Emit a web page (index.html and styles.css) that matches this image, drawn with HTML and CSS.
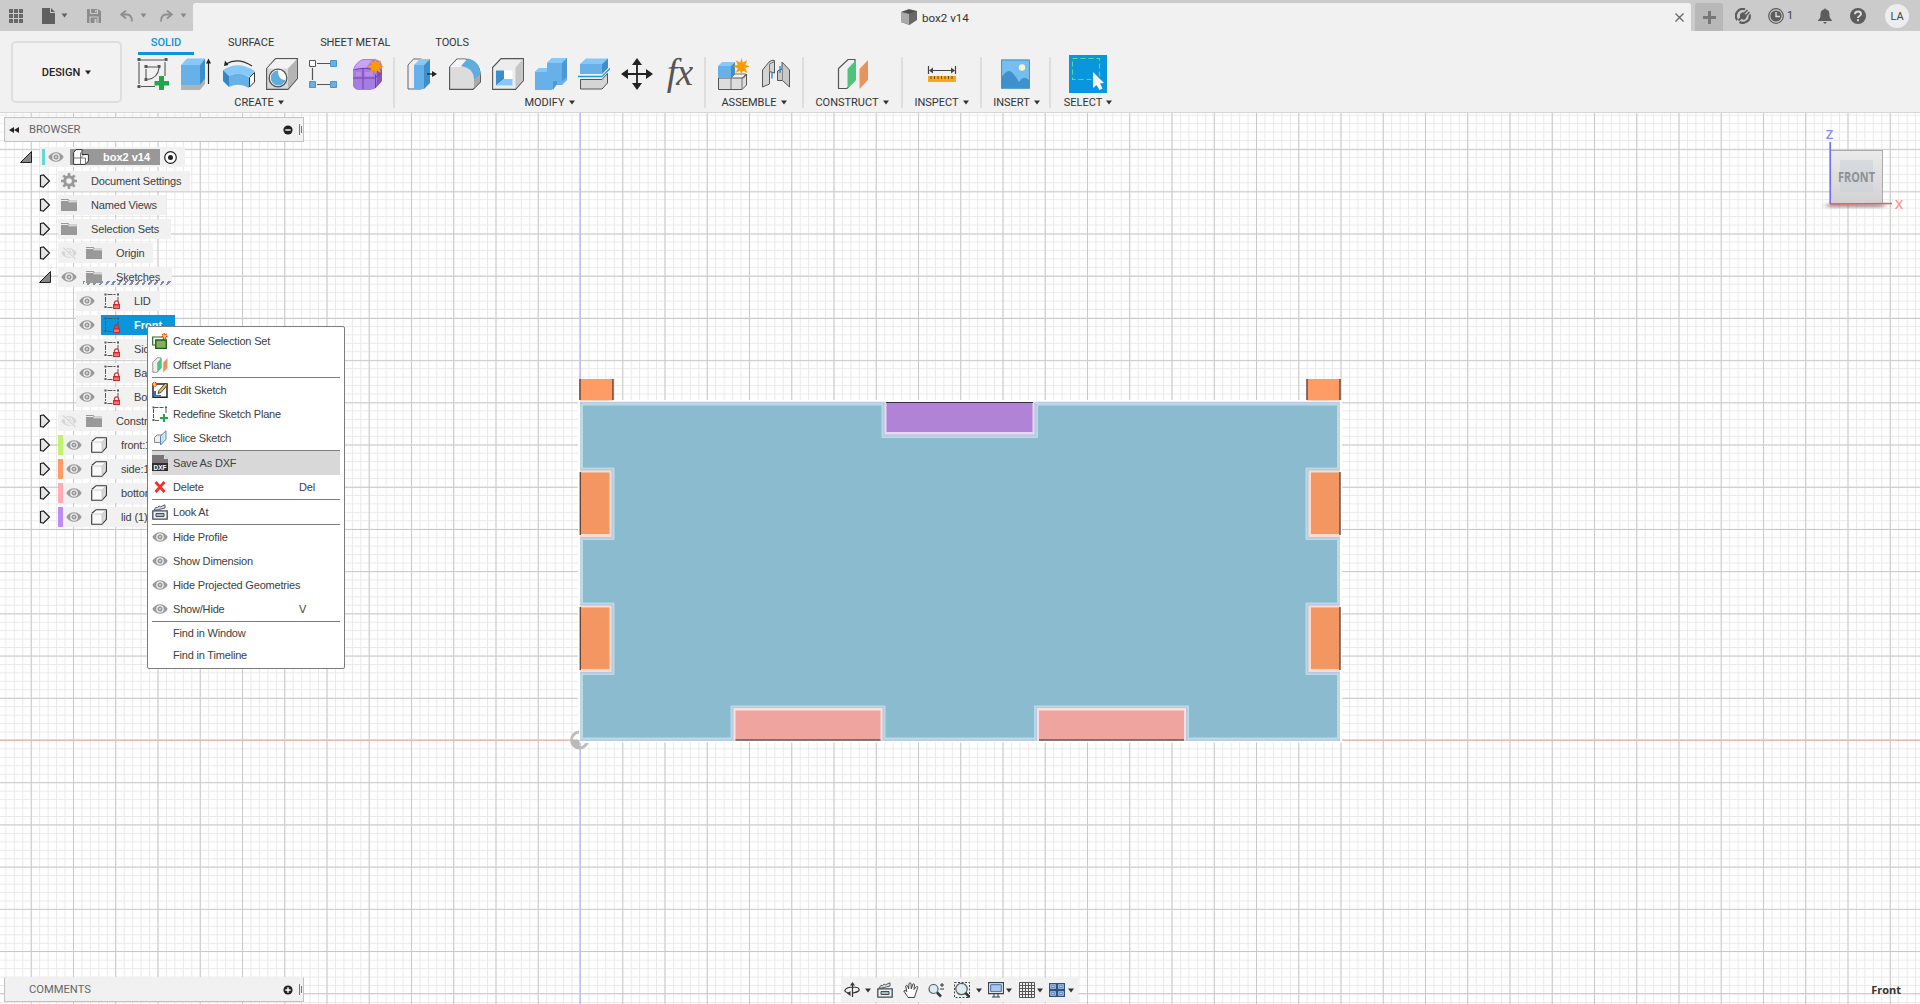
FILE: index.html
```html
<!DOCTYPE html>
<html lang="en">
<head>
<meta charset="utf-8">
<title>box2 v14</title>
<link rel="stylesheet" href="styles.css">
</head>
<body>
<svg class="defs" width="0" height="0">
  <symbol id="eye" viewBox="0 0 16 16"><path d="M.3 8C3.5 1.6 12.5 1.6 15.7 8 12.5 14.4 3.500 14.400.3 8z" fill="#999"/><circle cx="8" cy="8" r="3.200" fill="none" stroke="#eee" stroke-width="1.300"/><circle cx="8" cy="8" r="1" fill="#ddd"/></symbol>
  <symbol id="eye-off" viewBox="0 0 16 16"><path d="M.3 8C3.500 1.600 12.500 1.600 15.700 8 12.500 14.400 3.500 14.400.3 8z" fill="#d6d6d6"/><circle cx="8" cy="8" r="3.200" fill="none" stroke="#f1f1f1" stroke-width="1.300"/><path d="M1.500 3l13 11" stroke="#f1f1f1" stroke-width="3"/><path d="M2 2.500l12.500 11.500" stroke="#d6d6d6" stroke-width="1.200"/></symbol>
  <symbol id="folder" viewBox="0 0 16 16"><path d="M0 2h7.500l1 1.300H16V14H0z" fill="#999"/><path d="M0 3.500h7l1 1.300h8" stroke="#eee" fill="none"/><path d="M8 3.500h8v-2H9z" fill="#f1f1f1"/></symbol>
  <symbol id="gear" viewBox="0 0 16 16"><circle cx="8" cy="8" r="4.300" fill="none" stroke="#999" stroke-width="3"/><path d="M8 0v3M8 13v3M0 8h3M13 8h3M2.300 2.300l2.200 2.200M11.500 11.500l2.200 2.200M2.300 13.700l2.200-2.200M11.500 4.500l2.200-2.200" stroke="#999" stroke-width="2.600"/></symbol>
  <symbol id="sketch-lock" viewBox="0 0 16 16"><path d="M3.500 1.500h8M1.500 4v8M14 4v4M3.500 14.500h5" stroke="#555" fill="none" stroke-dasharray="5 1"/><path d="M.5.500h2v2h-2zM13 .5h2v2h-2zM.5 13h2v2h-2z" fill="#555"/><path d="M9 11h7v5H9z" fill="#d22b2b"/><path d="M10.500 11V9.800a2 2 0 0 1 4 0V11" fill="none" stroke="#d22b2b" stroke-width="1.200"/><path d="M10 12.500h5v2.500h-5z" fill="#e87878"/></symbol>
  <symbol id="cube" viewBox="0 0 16 16"><path d="M.5 4.500l4-4h11v10l-4.500 5H.5z" fill="#fafafa"/><path d="M11 5v10.500l4.500-5V.5z" fill="#d5d7da"/><path d="M.7 5v10.300H11l4.500-5V.7H5L.7 4.500" fill="none" stroke="#333" stroke-width="1.100"/><path d="M.7 5H11V15M11 5l4.300-4.300" fill="none" stroke="#c4c4c4" stroke-width=".8"/></symbol>
  <symbol id="closed" viewBox="0 0 12 16"><path d="M1.500 2.500L4.500 2l6 6-6 6-3-.5z" fill="#e6e6e6" stroke="#222" stroke-width="1.200"/></symbol>
  <symbol id="open" viewBox="0 0 12 12"><path d="M11.500.500v11H.5z" fill="#888" stroke="#222"/></symbol>
  <symbol id="down" viewBox="0 0 6 5"><path d="M0 .5h6L3 4.500z" fill="currentColor"/></symbol>
  <symbol id="spark" viewBox="0 0 16 16"><path d="M8 0l1.300 4.300L13.400 2 11.500 6.300 16 8l-4.500 1.500L13.500 14l-4.300-2.200L8 16l-1.300-4.200L2.500 14l2-4.300L0 8l4.500-1.700L2.500 2l4.300 2.200z" fill="#f90"/></symbol>
  <symbol id="planes" viewBox="0 0 32 32"><path d="M1.500 10.500L11 1.500h7v20l-8 9H1.500z" fill="#f0f0f0" stroke="#555" stroke-width="1.200"/><path d="M10.500 11L19 2v20l-8.500 9z" fill="#4fc37c"/><path d="M22.500 11L31 2v20l-8.500 9z" fill="#e6955e"/></symbol>
  <symbol id="clapper" viewBox="0 0 16 16"><path d="M.8 6.800h14.400v8.400H.8z" fill="#eef0f3" stroke="#454c57" stroke-width="1.300"/><path d="M2 6L4 3.200l1.500.6L7 2l1.500.8L13 .8V4L5 6z" fill="#dce0e5" stroke="#454c57" stroke-width=".9"/><path d="M4 9.500h8v3H4z" fill="#aeb6c0" stroke="#454c57"/></symbol>
</svg>

<header class="titlebar">
  <div class="quick">
    <svg class="q-grid" viewBox="0 0 14 14"><path d="M0 0h4v4H0zM5 0h4v4H5zM10 0h4v4h-4zM0 5h4v4H0zM5 5h4v4H5zM10 5h4v4h-4zM0 10h4v4H0zM5 10h4v4H5zM10 10h4v4h-4z" fill="#666"/></svg>
    <svg class="q-file" viewBox="0 0 13 16"><path d="M0 0h8v5h5v11H0zM9 0l4 4H9z" fill="#606060"/></svg>
    <svg class="q-arrow a1" viewBox="0 0 6 5"><use href="#down"/></svg>
    <svg class="q-save" viewBox="0 0 14 14"><path d="M0 0h11.500L14 2.500V14H0z" fill="#8b8b8b"/><path d="M3.500 0v4.500h7V0M3 14V8h8v6" fill="none" stroke="#cbcbcb" stroke-width="1.200"/><path d="M7.500 10h2v4h-2zM8 1h1.500v2H8z" fill="#cbcbcb"/></svg>
    <svg class="q-undo" viewBox="0 0 13 12"><path d="M6 .5L1 4.500l5 4M1.500 4.500H7q5 .3 5 7" fill="none" stroke="#8f8f8f" stroke-width="1.800"/></svg>
    <svg class="q-arrow a2" viewBox="0 0 6 5"><use href="#down"/></svg>
    <svg class="q-redo" viewBox="0 0 13 12"><path d="M7 .5l5 4-5 4M11.500 4.500H6q-5 .3-5 7" fill="none" stroke="#8f8f8f" stroke-width="1.800"/></svg>
    <svg class="q-arrow a3" viewBox="0 0 6 5"><use href="#down"/></svg>
  </div>
  <div class="doc-tab">
    <svg class="doc-icon" viewBox="0 0 16 16"><path d="M0 3l8-3 8 2v9l-7.500 5L0 13z" fill="#686868"/><path d="M0 3l8 2v10.500L0 13z" fill="#aaa"/><path d="M1 2.800l7-2 7 1.500-7 2.200z" fill="#4e4e4e"/></svg>
    <span class="doc-name">box2 v14</span>
    <svg class="doc-close" viewBox="0 0 9 9"><path d="M.5.500l8 8M8.500.500l-8 8" stroke="#666" stroke-width="1.300"/></svg>
  </div>
  <div class="new-tab"><svg width="13" height="13"><path d="M6.500 0v13M0 6.500h13" stroke="#777" stroke-width="3"/></svg></div>
  <div class="status">
    <svg class="s-ext" viewBox="0 0 16 16"><path d="M10 1.300A7 7 0 0 0 2.200 12M4.500 14A7 7 0 0 0 14.700 6.500" fill="none" stroke="#5c5c5c" stroke-width="2.200"/><path d="M3.500 12.500l3-3" stroke="#5c5c5c" stroke-width="2"/><path d="M5.500 5.500L8 4l4 4-1.500 3q-2.500 1.500-4.500-.5-2-2-.5-5z" fill="#5c5c5c"/><path d="M9 5.500L12.500 2M11 7.500l3.500-3.500" stroke="#5c5c5c" stroke-width="1.600"/></svg>
    <svg class="s-clock" viewBox="0 0 16 16"><circle cx="8" cy="8" r="7.300" fill="none" stroke="#5c5c5c" stroke-width="1.200"/><circle cx="8" cy="8" r="5.600" fill="#5c5c5c"/><path d="M8 4v4.500h4" fill="none" stroke="#ddd" stroke-width="1.400"/></svg>
    <span class="jobs">1</span>
    <svg class="s-bell" viewBox="0 0 14 16"><path d="M7 0l1 1.500C11 2 11.500 4 11.500 8q0 2.500 2.500 4.500v.5H0v-.5Q2.500 10.500 2.500 8C2.500 4 3 2 6 1.500zM5 14h4l-2 2z" fill="#5c5c5c"/></svg>
    <svg class="s-help" viewBox="0 0 16 16"><circle cx="8" cy="8" r="8" fill="#5c5c5c"/><path d="M5 6.200Q5 3.500 8 3.500t3 2.500q0 1.200-1.500 2T8 10M8 11.300v1.900" fill="none" stroke="#ddd" stroke-width="1.900"/></svg>
    <span class="avatar">LA</span>
  </div>
</header>

<nav class="ribbon">
  <button class="workspace">DESIGN <svg viewBox="0 0 6 5"><use href="#down"/></svg></button>
  <div class="ribbon-main">
    <div class="tabs"><span class="tab solid">SOLID</span><span class="tab surface">SURFACE</span><span class="tab sheet">SHEET METAL</span><span class="tab tools">TOOLS</span></div>
    <div class="groups">
      <section class="group g-create">
        <div class="tools-row">
          <svg viewBox="0 0 32 32"><path d="M3 2h24M2 4v22M28 4v14M4 28.500h14M10 9h10M9 11v9M22 10Q21 20 10.500 21.500" fill="none" stroke="#555" stroke-width="1.100"/><path d="M.5 0h3v3h-3zM27.500 0h3v3h-3zM.5 27h3v3h-3zM7.500 7h3v3h-3zM20.500 7h3v3h-3zM7.500 20h3v3h-3z" fill="#555"/><path d="M22 18h5v5h5v4.500h-5V32h-5v-4.500h-4.500V23H22z" fill="#1fa84a"/></svg>
          <svg viewBox="0 0 32 32"><path d="M1 27h19l5-6v5l-5 6H1z" fill="#b3b3b3"/><path d="M1 7h19v20H1z" fill="#68b0e8"/><path d="M1 7l6-6.500h18L20 7z" fill="#86c8f8"/><path d="M20 7l5-6.500V21l-5 6z" fill="#3c8fcb"/><path d="M28.500 26V3" stroke="#222" stroke-width="1.200"/><path d="M26 5.500L28.500.5l2.500 5z" fill="#222"/></svg>
          <svg viewBox="0 0 32 32"><path d="M0 12Q15 2 32 13l-5 6Q14 13 6 18z" fill="#86c8f8"/><path d="M0 12l6 6v11l-6-6z" fill="#3187c7"/><path d="M6 18q10-5 20 1v11q-10-6-20-1z" fill="#68b0e8"/><path d="M26.500 19.500l5-5V24l-5 5z" fill="#fff" stroke="#333"/><path d="M3 6Q15-1 29 8" fill="none" stroke="#333" stroke-width="1.300"/><path d="M1 8l1-5.500L5.500 7z" fill="#222"/></svg>
          <svg viewBox="0 0 32 32"><path d="M.6 10.500L9.500.6H31.400v20L22 31.400H.6z" fill="#d8d8d8" stroke="#555" stroke-width="1.100"/><path d="M1.200 10.500L10 1.200h20.500L22 10.500z" fill="#f3f3f3"/><path d="M22 10.500l8.800-9V20L22 30.500z" fill="#b4b4b4"/><circle cx="12" cy="20" r="8.800" fill="#fff" stroke="#555" stroke-width="1.300"/><path d="M12 12.500A7.500 7.500 0 1 0 19.500 22Q12 22 12 12.500z" fill="#5facdf"/></svg>
          <svg viewBox="0 0 32 32"><path d="M8 5.500h13M3.500 10v12M8 26.500h13" stroke="#555" stroke-width="1.200"/><path d="M.5 2.500h6v6h-6z" fill="#fff" stroke="#555"/><path d="M21.500 2.500h6v6h-6zM21.500 23.500h6v6h-6zM.5 23.500h6v6h-6z" fill="#68b0e8" stroke="#4c94cb"/></svg>
          <svg viewBox="0 0 32 32"><path d="M1 13Q1 9 5 5t7-4h10q7 1 8 6v15q-1 3-5 7-3 3-7 3H6q-4-1-5-4z" fill="#a57ce0"/><path d="M2 13q0-3 4-8 3-3 6-3h8l-6 8q-6-1-12 3z" fill="#c9a4f4"/><path d="M24 9l6 3v11l-6 6q2-8 0-20z" fill="#8557bd"/><path d="M11 10v21M1 20h22l7-6M1.500 12q12-4 22 1v17" fill="none" stroke="#7041aa"/><path d="M4 14h5v4H4zM13 14h8v4h-8z" fill="#b68cef"/><use href="#spark" x="15" y="0" width="17" height="17"/></svg>
        </div>
        <div class="label">CREATE <svg viewBox="0 0 6 5"><use href="#down"/></svg></div>
      </section>
      <section class="group g-modify">
        <div class="tools-row">
          <svg viewBox="0 0 32 32"><path d="M2 7l5.500-6h8v30H2z" fill="#eee" stroke="#666"/><path d="M8 7l6-6h10l-6 6z" fill="#86c8f8"/><path d="M8 7h10v24H8z" fill="#68b0e8"/><path d="M18 7l6-6v24l-6 6z" fill="#3c8fcb"/><path d="M21 16h6" stroke="#222" stroke-width="1.300"/><path d="M26 13l5 3-5 3z" fill="#222"/></svg>
          <svg viewBox="0 0 32 32"><path d="M.6 9L8 1h8q15 2 15.400 17v6L24 31.400H.6z" fill="#dcdcdc" stroke="#555" stroke-width="1.100"/><path d="M1 9L8 1.500h9L12 9z" fill="#f5f5f5"/><path d="M12 8l7-7.500Q31 3 31.500 17L25 22Q25 10 12 8z" fill="#5facdf"/><path d="M25 22l6-5v7l-6 6z" fill="#aaa"/></svg>
          <svg viewBox="0 0 32 32"><path d="M.6 9.500L9 .6h22.400v22L23.500 31.400H.6z" fill="#ececec" stroke="#555" stroke-width="1.100"/><path d="M23.500 9.500l7.300-8v21l-7.300 8z" fill="#c6c6c6"/><path d="M4 12.500h16.500v15H4z" fill="#fff"/><path d="M4 12.500h8V21l-8 6.500z" fill="#3c8fcb"/><path d="M4 27.500L12 21h8.500v6.500z" fill="#86c8f8"/></svg>
          <svg viewBox="0 0 32 32"><path d="M0 14l4-4h8V5l5-5h15v22l-5 5h-6l-4 5H0z" fill="#68b0e8"/><path d="M0 14l4-4h8v4zM12 5l5-5h15l-5 5z" fill="#86c8f8"/><path d="M27 5l5-5v19l-5 4h-6V5zM18 23h4v3l-4 6z" fill="#4b99d2"/><path d="M12 5h15v18h-9v5H12z" fill="#68b0e8"/></svg>
          <svg viewBox="0 0 32 32"><path d="M2 6l6-5.500h22L24 6z" fill="#86c8f8"/><path d="M2 6h22v10H2z" fill="#68b0e8"/><path d="M24 6l6-5.500V10l-6 6z" fill="#3c8fcb"/><path d="M0 18.500h24l8-8" fill="none" stroke="#1b9be0" stroke-width="1.300"/><path d="M2.500 21.500H24l5.500-6V25L24 31H2.500z" fill="#d5d5d5" stroke="#555"/></svg>
          <svg viewBox="0 0 32 32"><path d="M16 5v22M5 16h22" stroke="#222" stroke-width="1.800"/><path d="M16 0l5 7H11zM16 32l5-7H11zM0 16l7-5v10zM32 16l-7-5v10z" fill="#222"/></svg>
          <span class="fx">fx</span>
        </div>
        <div class="label">MODIFY <svg viewBox="0 0 6 5"><use href="#down"/></svg></div>
      </section>
      <section class="group g-assemble">
        <div class="tools-row">
          <svg viewBox="0 0 32 32"><path d="M1.500 20h25l3-4v11l-4.500 4.500H1.500z" fill="#ddd" stroke="#555"/><path d="M14 20v11M14 20l4-4h11l-4 4v11" fill="none" stroke="#777"/><path d="M1 8l4-4h13l-4 4z" fill="#86c8f8"/><path d="M1 8h13v12H1z" fill="#68b0e8"/><path d="M14 8l4-4v12l-4 4z" fill="#3c8fcb"/><use href="#spark" x="16" y="0" width="17" height="17"/></svg>
          <svg viewBox="0 0 32 32"><path d="M2.500 12L9 4q3-2.500 5.500-1.500v12.500l-5-1.500v12.500l-7 3z" fill="#d4d4d4" stroke="#555"/><path d="M9.500 14V6l5-2.500" fill="none" stroke="#777"/><path d="M22 4l7.500 8v17l-7-6.500h-5V13l4.500-2z" fill="#c8c8c8" stroke="#555"/><path d="M22.500 4.500v18" fill="none" stroke="#888"/><path d="M12 14.500v6M20 8v7" fill="none" stroke="#1b87d4" stroke-width="1.300"/></svg>
        </div>
        <div class="label">ASSEMBLE <svg viewBox="0 0 6 5"><use href="#down"/></svg></div>
      </section>
      <section class="group g-construct">
        <div class="tools-row"><svg viewBox="0 0 32 32"><use href="#planes"/></svg></div>
        <div class="label">CONSTRUCT <svg viewBox="0 0 6 5"><use href="#down"/></svg></div>
      </section>
      <section class="group g-inspect">
        <div class="tools-row"><svg viewBox="0 0 32 32"><path d="M2.500 8v8M29.500 8v8M5 12.500h22" stroke="#444" stroke-width="1.200"/><path d="M3 12.500l4-3v6zM29 12.500l-4-3v6z" fill="#444"/><path d="M2 18h28v6H2z" fill="#f6a91c"/><path d="M5 18v3M8.500 18v3M12 18v3M15.500 18v3M19 18v3M22.500 18v3M26 18v3" stroke="#6b5119"/></svg></div>
        <div class="label">INSPECT <svg viewBox="0 0 6 5"><use href="#down"/></svg></div>
      </section>
      <section class="group g-insert">
        <div class="tools-row"><svg viewBox="0 0 32 32"><path d="M2 1.500h29v29H2z" fill="#76bdf0"/><path d="M2 20q5-8 9-7 3 1 9 11 5-8 11-1v7.500H2z" fill="#3d91cc"/><path d="M2.500 2h28v28h-28z" fill="none" stroke="#4294d0"/><circle cx="23" cy="9.500" r="3.200" fill="#fbf7c8"/></svg></div>
        <div class="label">INSERT <svg viewBox="0 0 6 5"><use href="#down"/></svg></div>
      </section>
      <section class="group g-select">
        <div class="tools-row"><svg class="select-icon" viewBox="0 0 38 38"><path d="M0 0h38v38H0z" fill="#0a96dc"/><path d="M3.500 3.500h27v21h-27z" fill="none" stroke="#5fd897" stroke-dasharray="5 3" stroke-width="1.100"/><path d="M24 17v16l3.500-3 3 5 3-1.500-2.500-5 4-.5z" fill="#fff"/></svg></div>
        <div class="label">SELECT <svg viewBox="0 0 6 5"><use href="#down"/></svg></div>
      </section>
    </div>
  </div>
</nav>

<main class="viewport">
  <svg class="scene" width="1920" height="891" viewBox="0 113 1920 891">
    <defs>
      <pattern id="minor" x="580" y="740" width="8.450" height="8.450" patternUnits="userSpaceOnUse"><path d="M0 .5H8.450M.5 0V8.450" stroke="#e9e9e9" fill="none"/></pattern>
      <pattern id="major" x="580" y="740" width="42.250" height="42.200" patternUnits="userSpaceOnUse"><path d="M0 .5H42.250M.5 0V42.200" stroke="#c9c9c9" fill="none"/></pattern>
      <linearGradient id="cubeface" x1="0" y1="0" x2="0" y2="1"><stop offset="0" stop-color="#ebebeb"/><stop offset="1" stop-color="#d2d2d2"/></linearGradient>
      <filter id="soft" x="-20%" y="-200%" width="140%" height="500%"><feGaussianBlur stdDeviation="3 1.500"/></filter>
    </defs>
    <rect y="113" width="1920" height="891" fill="#fff"/>
    <rect y="113" width="1920" height="891" fill="url(#minor)"/>
    <rect y="113" width="1920" height="891" fill="url(#major)"/>
    <path d="M580 113V1004" stroke="#c3c2fa" stroke-width="1.600"/>
    <path d="M0 740H1920" stroke="#fbb6b6" stroke-width="1.400"/>
    <path d="M578 400H1342V742.500H578z" fill="#fff"/>
    <circle cx="579.500" cy="740" r="8" fill="none" stroke="#bebebe" stroke-width="3"/><path d="M571 740h8.500v9a9 9 0 0 1-8.500-9z" fill="#b9b9b9"/>
    <path d="M579 729h11v11h-11zM580 740h10v3h-10z" fill="#fff"/>
    <path d="M580 379h33v21h-33zM1307 379h33v21h-33z" fill="#ff9c66"/>
    <path d="M580 400.500h33M1307 400.500h33" stroke="#fbd5c3"/>
    <path d="M580 379.500h33M1307 379.500h33" stroke="#ef9e79"/>
    <path d="M580 379v21M613 379v21M1307 379v21M1340 379v21" stroke="#5e4232" stroke-width="1.400"/>
    <path d="M580 402.500H1340V740.500H580z" fill="#8abbcf"/>
    <path d="M581.500 404H884 M1036 404H1338.500V739M1338.500 739H1188M1036 739H883M733 739H581.500V404" fill="none" stroke="#bcd9e5" stroke-width="3"/>
    <path d="M580 402.500H884M1036 402.500h304M580 740.300h152M884 740.300h152M1188 740.300h152" stroke="#b9cbe4" stroke-width="1.600"/>
    <g fill="#bcd9e5"><rect x="580" y="467.500" width="34.500" height="72.500" rx="1"/><rect x="580" y="602.500" width="34.500" height="72.500" rx="1"/><rect x="1305.500" y="467.500" width="34.500" height="72.500" rx="1"/><rect x="1305.500" y="602.500" width="34.500" height="72.500" rx="1"/><path d="M881.500 402.500H1038V438H881.500zM730.500 705.500h155v35h-155zM1034 705.500h155v35h-155z"/></g>
    <g fill="#b7c8e2"><path d="M580 469h33v69.500h-33zM580 604h33v69.500h-33zM1307 469h33v69.500h-33zM1307 604h33v69.500h-33zM883 402.500h153.500V436.500H883zM732 707h152v33.500H732zM1035.500 707h152v33.500h-152z"/></g>
    <g fill="#f9dccf"><path d="M580 470.500h31.500V537H580zM580 605.500h31.500V672H580zM1308.500 470.500H1340V537h-31.500zM1308.500 605.500H1340V672h-31.500z"/></g>
    <path d="M884.500 402.500h150V434.500h-150z" fill="#e8d6f2"/><path d="M733.500 708h149v32.500h-149zM1037 708h149v32.500h-149z" fill="#f9dfdd"/>
    <path d="M580 472.500h29.500V534H580zM580 607.500h29.500V669H580zM1311 472.500h29V534h-29zM1311 607.500h29V669h-29z" fill="#f39661"/>
    <path d="M886.500 402H1032.500V432H886.500z" fill="#b083d7"/><path d="M735.500 710.500h145V740h-145zM1039 710.500h145V740h-145z" fill="#efa49f"/>
    <path d="M580.300 472v63M580.300 607v63M1340 472v63M1340 607v63" stroke="#5f4030" stroke-width="1.300"/>
    <path d="M886 402.500h147" stroke="#392a47" stroke-width="1.200"/><path d="M735.500 740h145M1039 740h145" stroke="#6c5454" stroke-width="1.500"/>
    <path d="M1827 204h60l-5 3h-55z" fill="#888" filter="url(#soft)"/>
    <rect x="1830.500" y="150.500" width="52" height="53" fill="url(#cubeface)" stroke="#aaa"/>
    <rect x="1840" y="160" width="33" height="32" fill="#cbd0d8" opacity=".55"/>
    <text class="cube-text" x="1856.500" y="181.500" textLength="37" lengthAdjust="spacingAndGlyphs">FRONT</text>
    <path d="M1830.200 142v62" stroke="#7472f2" stroke-width="1.700"/><path d="M1830 204l62-.5" stroke="#ea5b5b" stroke-width="1.700"/>
    <text class="axis z" x="1829.500" y="138.500">Z</text><text class="axis x" x="1899" y="208.500">X</text>
  </svg>

  <aside class="browser">
    <div class="panel-head"><svg class="rewind" viewBox="0 0 10 6"><path d="M5 0v6L0 3zM10 0v6L5 3z" fill="#222"/></svg><span>BROWSER</span><svg class="round" viewBox="0 0 10 10"><circle cx="5" cy="5" r="4.600" fill="#222"/><path d="M2.300 5h5.400" stroke="#fff" stroke-width="1.400"/></svg><svg class="grip" viewBox="0 0 3 11"><path d="M.5 0v11M2.500 2v7" stroke="#777"/></svg></div>
    <div class="tree">
      <div class="row l0"><svg class="tw o"><use href="#open"/></svg><div class="item root"><i class="bar cyan"></i><svg class="ic"><use href="#eye"/></svg><div class="root-name"><svg class="ic" viewBox="0 0 16 16"><path d="M.6 3.500L3 .6h6v4.900h6.400V12l-3 3.400H.6z" fill="#fff" stroke="#333"/><path d="M.6 9h6.900V3.500M7.500 9l3-3M7.500 9h5v6M7.500 9v6" fill="none" stroke="#777"/></svg><b>box2 v14</b></div><svg class="radio" viewBox="0 0 13 13"><circle cx="6.500" cy="6.500" r="5.800" fill="#fff" stroke="#222" stroke-width="1.200"/><circle cx="6.500" cy="6.500" r="2.500" fill="#222"/></svg></div></div>
      <div class="row l1"><svg class="tw"><use href="#closed"/></svg><div class="item end9"><svg class="ic"><use href="#gear"/></svg><span>Document Settings</span></div></div>
      <div class="row l1"><svg class="tw"><use href="#closed"/></svg><div class="item end9"><svg class="ic"><use href="#folder"/></svg><span>Named Views</span></div></div>
      <div class="row l1"><svg class="tw"><use href="#closed"/></svg><div class="item"><svg class="ic"><use href="#folder"/></svg><span>Selection Sets</span></div></div>
      <div class="row l1"><svg class="tw"><use href="#closed"/></svg><div class="item end9"><svg class="ic"><use href="#eye-off"/></svg><svg class="ic two"><use href="#folder"/></svg><span>Origin</span></div></div>
      <div class="row l1"><svg class="tw o"><use href="#open"/></svg><div class="item hatch"><svg class="ic"><use href="#eye"/></svg><svg class="ic two"><use href="#folder"/></svg><span>Sketches</span></div></div>
      <div class="row l2"><div class="item end9"><svg class="ic"><use href="#eye"/></svg><svg class="ic two"><use href="#sketch-lock"/></svg><span>LID</span></div></div>
      <div class="row l2"><div class="item active"><svg class="ic"><use href="#eye"/></svg><svg class="ic two"><use href="#sketch-lock"/></svg><span>Front</span></div></div>
      <div class="row l2"><div class="item"><svg class="ic"><use href="#eye"/></svg><svg class="ic two"><use href="#sketch-lock"/></svg><span>Side</span></div></div>
      <div class="row l2"><div class="item"><svg class="ic"><use href="#eye"/></svg><svg class="ic two"><use href="#sketch-lock"/></svg><span>Back</span></div></div>
      <div class="row l2"><div class="item"><svg class="ic"><use href="#eye"/></svg><svg class="ic two"><use href="#sketch-lock"/></svg><span>Bottom</span></div></div>
      <div class="row l1"><svg class="tw"><use href="#closed"/></svg><div class="item"><svg class="ic"><use href="#eye-off"/></svg><svg class="ic two"><use href="#folder"/></svg><span>Construction</span></div></div>
      <div class="row l1"><svg class="tw"><use href="#closed"/></svg><div class="item comp"><i class="bar green"></i><svg class="ic"><use href="#eye"/></svg><svg class="ic two"><use href="#cube"/></svg><span>front:1</span></div></div>
      <div class="row l1"><svg class="tw"><use href="#closed"/></svg><div class="item comp"><i class="bar orange"></i><svg class="ic"><use href="#eye"/></svg><svg class="ic two"><use href="#cube"/></svg><span>side:1</span></div></div>
      <div class="row l1"><svg class="tw"><use href="#closed"/></svg><div class="item comp"><i class="bar pink"></i><svg class="ic"><use href="#eye"/></svg><svg class="ic two"><use href="#cube"/></svg><span>bottom:1</span></div></div>
      <div class="row l1"><svg class="tw"><use href="#closed"/></svg><div class="item comp"><i class="bar purple"></i><svg class="ic"><use href="#eye"/></svg><svg class="ic two"><use href="#cube"/></svg><span>lid (1):1</span></div></div>
    </div>
  </aside>

  <div class="menu">
    <div class="mi"><svg class="ic" viewBox="0 0 16 16"><path d="M.7 4h11v8H.7z" fill="#fff" stroke="#2c6b1f" stroke-width="1.200"/><path d="M3.700 7h10.600v8.300H3.700z" fill="#82b35c" stroke="#1f5a16" stroke-width="1.300"/><circle cx="12.500" cy="3" r="2.300" fill="#ffd23a" stroke="#d6301c" stroke-width="1.500" stroke-dasharray="1 .8"/></svg><span>Create Selection Set</span></div>
    <div class="mi"><svg class="ic"><use href="#planes"/></svg><span>Offset Plane</span></div>
    <hr>
    <div class="mi"><svg class="ic" viewBox="0 0 16 16"><path d="M1 2h14v13.200H1z" fill="#fff" stroke="#222" stroke-width="1.500"/><path d="M2 9h2v4h5v1.500H2z" fill="#2c72d2"/><path d="M6 11.500l1-3L13.500 1l2 2L9 10.500z" fill="#eeb94d" stroke="#222" stroke-width=".8"/><circle cx="2.500" cy="2.500" r="2" fill="#ffd23a" stroke="#d6301c" stroke-width="1.300" stroke-dasharray="1 .8"/></svg><span>Edit Sketch</span></div>
    <div class="mi"><svg class="ic" viewBox="0 0 16 16"><path d="M2.500 1.500h10M1.500 3v10M14 3v4M3 14.500h5" stroke="#555" stroke-dasharray="4 1"/><path d="M.5.500h2v2h-2zM13 .5h2v2h-2zM.5 13h2v2h-2z" fill="#555"/><path d="M12 8v8M8 12h8" stroke="#1fa84a" stroke-width="2"/></svg><span>Redefine Sketch Plane</span></div>
    <div class="mi"><svg class="ic" viewBox="0 0 16 16"><path d="M2.500 7.500L5 5h6v5l-2 2.500H2.500z" fill="#eee" stroke="#888"/><path d="M8.500 6L14 .8v8.500L8.500 15z" fill="#cfe4f5" fill-opacity=".8" stroke="#5387b4"/></svg><span>Slice Sketch</span></div>
    <hr>
    <div class="mi hover"><svg class="ic" viewBox="0 0 16 16"><path d="M0 0h12l4 4v4H0z" fill="#777"/><path d="M12 0v4h4z" fill="#ddd"/><path d="M0 8h16v8H0z" fill="#2e2e2e"/><text class="dxf" x="1.500" y="14.500" textLength="13" lengthAdjust="spacingAndGlyphs">DXF</text></svg><span>Save As DXF</span></div>
    <div class="mi"><svg class="ic" viewBox="0 0 16 16"><path d="M3.500 3l9 10M12.500 3l-9 10" stroke="#f5302a" stroke-width="2.800"/></svg><span>Delete</span><kbd>Del</kbd></div>
    <hr>
    <div class="mi"><svg class="ic"><use href="#clapper"/></svg><span>Look At</span></div>
    <hr>
    <div class="mi"><svg class="ic"><use href="#eye"/></svg><span>Hide Profile</span></div>
    <div class="mi"><svg class="ic"><use href="#eye"/></svg><span>Show Dimension</span></div>
    <div class="mi"><svg class="ic"><use href="#eye"/></svg><span>Hide Projected Geometries</span></div>
    <div class="mi"><svg class="ic"><use href="#eye"/></svg><span>Show/Hide</span><kbd>V</kbd></div>
    <hr>
    <div class="mi plain"><span>Find in Window</span></div>
    <div class="mi plain"><span>Find in Timeline</span></div>
  </div>

  <div class="comments panel-head"><span>COMMENTS</span><svg class="round" viewBox="0 0 10 10"><circle cx="5" cy="5" r="4.600" fill="#222"/><path d="M2.300 5h5.400M5 2.300v5.400" stroke="#fff" stroke-width="1.400"/></svg><svg class="grip" viewBox="0 0 3 11"><path d="M.5 0v11M2.500 2v7" stroke="#777"/></svg></div>

  <div class="navbar">
    <svg class="n" viewBox="0 0 16 16"><path d="M8.500 1v14M6 11.500Q0 10 1 8q2-3 8-3t6 2.500q1 2-6 3.500" fill="none" stroke="#333" stroke-width="1.200"/><path d="M6 3.500L8.500 0 11 3.500zM6.500 9v5L3 11.500z" fill="#333"/></svg><svg class="d d1" viewBox="0 0 6 5"><use href="#down"/></svg>
    <svg class="n look"><use href="#clapper"/></svg>
    <svg class="n hand" viewBox="0 0 16 16"><path d="M4.500 14.500L.8 9q.8-1.500 3 .5L2.700 4q1.200-1.500 2 0l1 3L6 1.500q1-1.500 2 0L8.300 7l1.500-4.800q1.500-1 1.700.3L11 7.500l2.500-3q1.500-.3 1.200 1L12.500 12l-1 3.500H5z" fill="#fff" stroke="#444"/></svg>
    <svg class="n zoom" viewBox="0 0 16 16"><circle cx="5.500" cy="7" r="4.500" fill="#dcecf0" stroke="#50616a" stroke-width="1.200"/><path d="M9 10.500l4 4" stroke="#333" stroke-width="2.500"/><path d="M12 3h4M14 1v4M12 7h4" stroke="#333"/></svg>
    <svg class="n win" viewBox="0 0 16 16"><path d="M.5.500h15v15H.5z" fill="none" stroke="#444" stroke-dasharray="2 1.500"/><circle cx="7.500" cy="7" r="5.700" fill="#dcecf0" stroke="#50616a" stroke-width="1.200"/><path d="M11.500 11l4 4" stroke="#333" stroke-width="2.500"/></svg><svg class="d d2" viewBox="0 0 6 5"><use href="#down"/></svg>
    <svg class="n mon" viewBox="0 0 16 16"><path d="M.6.600h14.800v11H.6z" fill="#fff" stroke="#39404c" stroke-width="1.200"/><path d="M2.700 2.700h10.600v7H2.700z" fill="#a9c9ec" stroke="#406ba0"/><path d="M6 12v3M10 12v3M4 15h8" stroke="#39404c"/></svg><svg class="d d3" viewBox="0 0 6 5"><use href="#down"/></svg>
    <svg class="n lat" viewBox="0 0 16 16"><path d="M.5.500h15v15H.5zM3.500 0v16M6.500 0v16M9.500 0v16M12.500 0v16M0 3.500h16M0 6.500h16M0 9.500h16M0 12.500h16" fill="none" stroke="#555"/></svg><svg class="d d4" viewBox="0 0 6 5"><use href="#down"/></svg>
    <svg class="n quad" viewBox="0 0 16 14"><path d="M.6.600h6.800v5.800H.6zM8.600.600h6.800v5.800H8.600zM.6 7.600h6.800v5.800H.6zM8.600 7.600h6.800v5.800H8.600z" fill="#b3cdec" stroke="#2f527f" stroke-width="1.200"/><path d="M2.500 2.500h3v2h-3zM10.500 2.500h3v2h-3zM2.500 9.500h3v2h-3zM10.500 9.500h3v2h-3z" fill="none" stroke="#5a82b5" stroke-width=".8"/></svg><svg class="d d5" viewBox="0 0 6 5"><use href="#down"/></svg>
  </div>
  <div class="view-name">Front</div>
</main>
</body>
</html>
```
FILE: styles.css
```css
* { box-sizing: border-box; }
body { margin: 0; width: 1920px; height: 1004px; overflow: hidden; display: flex; flex-direction: column; font: 11px "Liberation Sans", Arial, sans-serif; color: #404040; background: #f1f1f1; }
svg { display: block; flex: none; }
.defs { position: absolute; }

/* title bar */
.titlebar { height: 31px; flex: none; display: flex; background: #cbcbcb; }
.quick { width: 193px; display: flex; align-items: center; padding-left: 9px; }
.q-grid { width: 14px; height: 14px; }
.q-file { width: 13px; height: 16px; margin-left: 19px; }
.q-arrow { width: 7px; height: 5px; margin-left: 6px; color: #606060; }
.q-save { width: 14px; height: 14px; margin-left: 19px; }
.q-undo { width: 13px; height: 12px; margin-left: 19px; }
.q-redo { width: 13px; height: 12px; margin-left: 13px; }
.a2, .a3 { margin-left: 7px; color: #888; }
.doc-tab { width: 1498px; margin-top: 3px; border-radius: 3px 3px 0 0; background: #f1f1f1; display: flex; align-items: center; padding: 0 7px 0 708px; }
.doc-icon { width: 16px; height: 16px; }
.doc-name { margin-left: 5px; font: 11.6px Roboto, sans-serif; color: #333; padding-top: 1px; }
.doc-close { width: 9px; height: 9px; margin-left: auto; }
.new-tab { width: 28px; margin: 3px 0 0 4px; border-radius: 3px 3px 0 0; background: #b8b8b8; display: flex; align-items: center; justify-content: center; }
.status { flex: 1; display: flex; align-items: center; padding-left: 12px; font: 11px Roboto, sans-serif; }
.s-ext { width: 16px; height: 16px; }
.s-clock { width: 16px; height: 16px; margin-left: 17px; }
.jobs { width: 8px; margin-left: 3px; }
.s-bell { width: 14px; height: 16px; margin-left: 23px; }
.s-help { width: 16px; height: 16px; margin-left: 18px; }
.avatar { width: 24px; height: 24px; margin-left: 19px; border-radius: 50%; background: #ededed; line-height: 25px; text-align: center; color: #444; }

/* ribbon */
.ribbon { height: 82px; flex: none; display: flex; background: #f1f1f1; border-bottom: 1px solid #d6d6d6; font-family: Roboto, sans-serif; color: #333; }
.workspace { width: 111px; height: 62px; margin: 10px 0 0 11px; border: 2px solid #dedede; border-radius: 5px; background: #f2f2f2; font: 500 11px Roboto, sans-serif; color: #222; display: flex; align-items: center; justify-content: center; gap: 5px; padding: 0; }
.workspace svg, .label svg { width: 6px; height: 5px; }
.ribbon-main { margin-left: 3px; }
.tabs { display: flex; height: 24px; }
.tab { font-size: 11px; line-height: 23px; text-align: center; white-space: nowrap; }
.solid { width: 56px; margin-left: 13px; color: #0a96dc; font-weight: 500; border-bottom: 3px solid #0a96dc; }
.surface { margin-left: 34px; }
.sheet { margin-left: 46px; letter-spacing: -.1px; }
.tools { margin-left: 45px; letter-spacing: -.1px; }
.groups { display: flex; height: 56px; }
.group { display: flex; flex-direction: column; align-items: center; padding-right: 2px; background: linear-gradient(#dedede, #dedede) right 2px / 2px 51px no-repeat; }
.g-create { width: 270px; }
.g-modify { width: 311px; }
.g-assemble { width: 98px; }
.g-construct { width: 99px; }
.g-inspect { width: 79px; }
.g-insert { width: 69px; }
.g-select { width: 74px; padding: 0; background: none; }
.group { background-position: right 0 top 2px; }
.tools-row { display: flex; flex: none; align-items: center; gap: 11px; height: 38px; }
.g-create .tools-row, .g-modify .tools-row { padding-left: 2px; }
.g-insert .tools-row { padding-right: 2px; }
.tools-row svg, .fx { width: 32px; height: 32px; }
.tools-row .select-icon { width: 38px; height: 38px; }
.fx { font: italic 38px/28px "Liberation Serif", serif; color: #555; letter-spacing: -1px; text-align: center; }
.label { display: flex; flex: none; align-items: center; gap: 4px; font-size: 11px; line-height: 16px; padding-top: 2px; }
.label svg { margin-top: -2px; }
.g-construct .label { padding-right: 1px; }
.g-insert .label { padding-left: 2px; }

/* viewport */
.viewport { position: relative; flex: 1; }
.scene { position: absolute; left: 0; top: 0; }
.cube-text { font: bold 13.5px "Open Sans", sans-serif; fill: #8d9095; text-anchor: middle; }
.axis { font: 600 13px "Open Sans", sans-serif; text-anchor: middle; }
.axis.z { fill: #8d8cff; }
.axis.x { fill: #ff8d8d; }

/* browser panel */
.browser { position: absolute; left: 4px; top: 4px; width: 300px; }
.panel-head { height: 25px; border: 1px solid #c2c2c2; background: #f1f1f1; display: flex; align-items: center; padding: 0 1px 0 4px; font: 11.2px Roboto, sans-serif; color: #666; }
.rewind { width: 10px; height: 6px; margin-right: 10px; }
.round { width: 10px; height: 10px; margin-left: auto; margin-right: 6px; }
.grip { width: 3px; height: 11px; }
.tree { padding-top: 3px; }
.row { height: 24px; display: flex; align-items: center; }
.l0 { padding-left: 16px; }
.l1 { padding-left: 35px; }
.l2 { padding-left: 72px; }
.tw { width: 12px; height: 16px; margin-right: 7px; }
.tw.o { height: 12px; }
.l0 .tw { margin-right: 8px; }
.item { height: 20px; background: #f1f1f1; display: flex; align-items: center; padding: 0 12px 0 3px; letter-spacing: -.16px; white-space: nowrap; }
.ic { width: 16px; height: 16px; }
.two { margin-left: 9px; }
.item span { margin-left: 14px; line-height: 20px; }
.end9 { padding-right: 9px; }
.comp { padding-left: 0; }
.bar { width: 5px; height: 20px; margin-right: 3px; }
.cyan { width: 3px; height: 16px; background: #62d9dd; }
.green { background: #c3f36e; }
.orange { background: #ff9c66; }
.pink { background: #ffacb2; }
.purple { background: #be8cf2; }
.item.root { padding: 0 8px 0 2px; }
.root-name { width: 90px; height: 16px; margin: 0 4px 0 6px; padding-left: 3px; background: #989898; color: #fff; display: flex; align-items: center; gap: 14px; letter-spacing: 0; }
.radio { width: 13px; height: 13px; }
.hatch { background: repeating-linear-gradient(125deg, #7d8db5 0 2px, #f1f1f1 2px 5px) 25px 14px / 88px 4px no-repeat #f1f1f1; }
.active { background: linear-gradient(90deg, #f1f1f1 25px, #0a96dc 25px); color: #fff; font-weight: bold; letter-spacing: 0; padding-right: 13px; }

/* context menu */
.menu { position: absolute; left: 147px; top: 213px; width: 198px; height: 343px; padding: 2px 4px; background: #fff; border: 1px solid #7c7c7c; border-radius: 2px; letter-spacing: -.19px; }
.mi { height: 24px; display: flex; align-items: center; position: relative; }
.mi span { margin-left: 5px; }
.mi kbd { position: absolute; left: 147px; font: inherit; }
.mi.hover { background: #d8d8d8; }
.mi.plain { height: 22px; padding-left: 16px; }
.menu hr { height: 1px; border: 0; margin: 0; background: #7c7c7c; }
.dxf { font: bold 7px "Liberation Sans", sans-serif; fill: #fff; letter-spacing: 0; }

/* bottom */
.comments { position: absolute; left: 4px; top: 864px; width: 300px; padding-left: 24px; border-top-color: #f1f1f1; }
.navbar { position: absolute; left: 841px; top: 865px; width: 237px; height: 24px; background: #f1f1f1; display: flex; align-items: center; padding-left: 3px; color: #333; }
.n { width: 16px; height: 16px; }
.d { width: 6px; height: 5px; }
.d1 { margin-left: 5px; }
.look { margin-left: 6px; }
.hand { margin-left: 10px; }
.zoom { margin-left: 9px; }
.win { margin-left: 10px; }
.d2 { margin-left: 6px; }
.mon { margin-left: 6px; }
.d3 { margin-left: 2px; }
.lat { margin-left: 7px; }
.d4 { margin-left: 2px; }
.quad { margin-left: 6px; height: 14px; }
.d5 { margin-left: 3px; }
.view-name { position: absolute; right: 19px; top: 869px; font: bold 11px "Open Sans", sans-serif; color: #333; }
```
